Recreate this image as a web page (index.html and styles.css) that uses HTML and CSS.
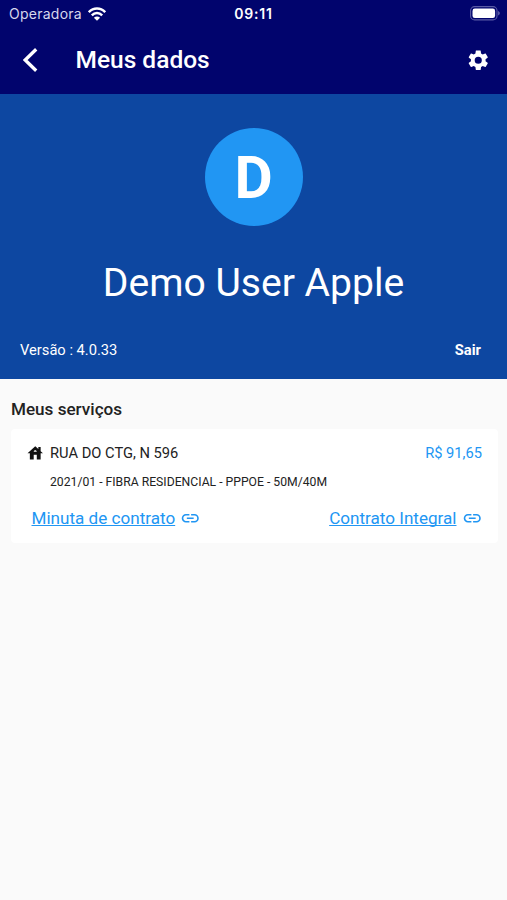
FILE: index.html
```html
<!DOCTYPE html>
<html lang="pt-BR">
<head>
<meta charset="utf-8">
<title>Meus dados</title>
<link rel="stylesheet" href="styles.css">
</head>
<body>
<header class="top">
  <div class="status">
    <div class="carrier"><span>Operadora</span>
      <svg class="wifi" viewBox="0 0 18 14"><g fill="none" stroke="#fff" stroke-width="2.5"><path d="M.8 5.2C5.4.4 12.6.4 17.2 5.2"/><path d="M3.8 8.3c3-3 7.4-3 10.4 0"/></g><path fill="#fff" d="M5.9 10.7c1.8-1.6 4.4-1.6 6.2 0L9 13.8z"/></svg>
    </div>
    <time class="clock">09:11</time>
    <svg class="battery" viewBox="0 0 30 15"><rect x=".6" y=".6" width="26.4" height="13.3" rx="4" fill="none" stroke="#5a5ba5" stroke-width="1.1"/><rect x="2.5" y="2.6" width="22.6" height="9.4" rx="2.3" fill="#fff"/><path fill="#6a6bb0" d="M28.2 5c2 .8 2 3.7 0 4.5z"/></svg>
  </div>
  <div class="bar">
    <svg class="back" viewBox="0 0 15 24"><path d="M13.2 1.2 2.2 12l11 10.8" fill="none" stroke="#fff" stroke-width="3.3"/></svg>
    <h1>Meus dados</h1>
    <svg class="gear" viewBox="0 0 24 24"><path fill="#fff" d="M19.14 12.94c.04-.3.06-.61.06-.94 0-.32-.02-.64-.07-.94l2.03-1.58c.18-.14.23-.41.12-.61l-1.92-3.32c-.12-.22-.37-.29-.59-.22l-2.39.96c-.5-.38-1.03-.7-1.62-.94l-.36-2.54c-.04-.24-.24-.41-.48-.41h-3.84c-.24 0-.43.17-.47.41l-.36 2.54c-.59.24-1.13.57-1.62.94l-2.39-.96c-.22-.08-.47 0-.59.22L2.74 8.87c-.12.21-.08.47.12.61l2.03 1.58c-.05.3-.09.63-.09.94s.02.64.07.94l-2.03 1.58c-.18.14-.23.41-.12.61l1.92 3.32c.12.22.37.29.59.22l2.39-.96c.5.38 1.03.7 1.62.94l.36 2.54c.05.24.24.41.48.41h3.84c.24 0 .44-.17.47-.41l.36-2.54c.59-.24 1.13-.56 1.62-.94l2.39.96c.22.08.47 0 .59-.22l1.92-3.32c.12-.22.07-.47-.12-.61zM12 15.5a3.5 3.5 0 1 1 0-7 3.5 3.5 0 0 1 0 7z"/></svg>
  </div>
</header>
<section class="profile">
  <div class="avatar"><span>D</span></div>
  <div class="name">Demo User Apple</div>
  <div class="meta"><span>Versão : 4.0.33</span><b>Sair</b></div>
</section>
<main>
  <h2>Meus serviços</h2>
  <article class="card">
    <div class="address">
      <svg class="house" viewBox="0 0 24 24"><path fill="#111" d="M19 9.3V4h-3v2.6L12 3 2 12h3v8h5v-6h4v6h5v-8h3l-3-2.7zm-9 .7c0-1.1.9-2 2-2s2 .9 2 2h-4z"/></svg>
      <span>RUA DO CTG, N 596</span><span class="price">R$ 91,65</span>
    </div>
    <div class="plan">2021/01 - FIBRA RESIDENCIAL - PPPOE - 50M/40M</div>
    <div class="links">
      <span class="link"><a>Minuta de contrato</a><svg viewBox="0 0 24 24"><path d="M3.9 12c0-1.71 1.39-3.1 3.1-3.1h4V7H7a5 5 0 0 0 0 10h4v-1.9H7c-1.71 0-3.1-1.39-3.1-3.1zM8 13h8v-2H8v2zm9-6h-4v1.9h4a3.1 3.1 0 0 1 0 6.2h-4V17h4a5 5 0 0 0 0-10z"/></svg></span>
      <span class="link"><a>Contrato Integral</a><svg viewBox="0 0 24 24"><path d="M3.9 12c0-1.71 1.39-3.1 3.1-3.1h4V7H7a5 5 0 0 0 0 10h4v-1.9H7c-1.71 0-3.1-1.39-3.1-3.1zM8 13h8v-2H8v2zm9-6h-4v1.9h4a3.1 3.1 0 0 1 0 6.2h-4V17h4a5 5 0 0 0 0-10z"/></svg></span>
    </div>
  </article>
</main>
</body>
</html>
```
FILE: styles.css
```css
* { box-sizing: border-box; }
body { margin: 0; min-height: 900px; background: #fafafa; font-family: Roboto, sans-serif; color: #222; }
svg { display: block; flex: none; }
h1, h2 { margin: 0; }
.top { height: 94px; background: #01046d; color: #fff; }
.status { height: 27px; display: grid; grid-template-columns: 1fr auto 1fr; align-items: center; padding: 0 7px 0 9px; font-family: Inter, sans-serif; }
.carrier { display: flex; align-items: center; gap: 6px; font-size: 14px; letter-spacing: .25px; color: #d6d7ec; }
.wifi { width: 18px; height: 14px; }
.clock { font-size: 14px; font-weight: 600; letter-spacing: .8px; margin-right: 2px; }
.battery { width: 30px; height: 15px; justify-self: end; }
.bar { height: 66px; display: flex; align-items: center; padding: 0 17px 0 23px; }
.back { width: 15px; height: 24px; }
.bar h1 { margin-left: 37.5px; font-size: 24.5px; line-height: 30px; font-weight: 500; }
.gear { width: 24.5px; height: 24.5px; margin-left: auto; }
.profile { height: 285px; padding-top: 34px; background: #0d47a1; color: #fff; }
.avatar { width: 98px; height: 98px; margin: 0 auto; border-radius: 50%; background: #2196f3; display: flex; align-items: center; justify-content: center; font-size: 58.8px; font-weight: 700; }
.name { margin-top: 34px; text-align: center; font-size: 39.1px; line-height: 46px; }
.meta { margin-top: 35px; padding: 0 26px 0 20px; display: flex; justify-content: space-between; font-size: 14.7px; line-height: 18px; }
main { padding: 20px 9px 0 11px; }
h2 { font-size: 17.1px; line-height: 20px; font-weight: 500; }
.card { height: 114px; margin-top: 10px; padding: 14px 16px 0; border-radius: 4px; background: #fff; }
.address { display: flex; align-items: center; height: 20px; font-size: 14.7px; }
.house { width: 18.5px; height: 18.5px; margin: 0 5.5px 0 -1px; }
.price { margin-left: auto; color: #2196f3; }
.plan { margin: 11px 0 0 23px; font-size: 12.2px; line-height: 16px; }
.links { display: flex; justify-content: space-between; margin: 18px 0 0 4.5px; }
.link { display: flex; align-items: center; gap: 5px; color: #2196f3; font-size: 17.1px; line-height: 20px; }
.link a { text-decoration: underline; text-underline-offset: 1px; text-decoration-thickness: 1px; text-decoration-skip-ink: none; }
.link svg { width: 20.5px; height: 20.5px; fill: currentColor; }
```
